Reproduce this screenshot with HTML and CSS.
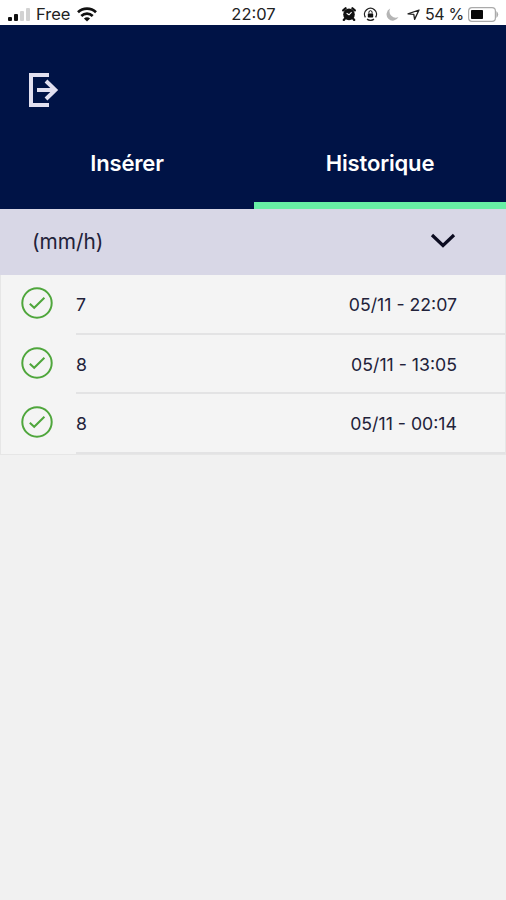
FILE: index.html
```html
<!DOCTYPE html>
<html lang="fr">
<head>
    <meta charset="UTF-8">
    <meta name="viewport" content="width=device-width, initial-scale=1.0">
    <title>Historique</title>
    <link rel="stylesheet" href="styles.css">
</head>
<body>
    <div class="status-bar">
        <div class="status-left">
            <svg class="signal" width="23" height="13" viewBox="0 0 23 13">
                <rect x="0" y="9" width="4" height="4" rx="1" fill="#111"/>
                <rect x="6" y="6" width="4" height="7" rx="1" fill="#111"/>
                <rect x="12" y="3" width="4" height="10" rx="1" fill="#d2d2d2"/>
                <rect x="18" y="0" width="4" height="13" rx="1" fill="#d2d2d2"/>
            </svg>
            <span class="carrier">Free</span>
            <svg class="wifi" width="20" height="15" viewBox="0 0 20 15" fill="none" stroke="#111" stroke-width="2.7">
                <path d="M1 5.2C6 .4 14 .4 19 5.2"/>
                <path d="M4.3 8.9C7.6 5.8 12.4 5.8 15.7 8.9"/>
                <path d="M10 14.5L6.9 11.5Q10 9 13.1 11.5Z" fill="#111" stroke="none"/>
            </svg>
        </div>
        <span class="clock">22:07</span>
        <div class="status-right">
            <svg width="14" height="14" viewBox="0 0 14 14">
                <circle cx="7" cy="7.4" r="5.8" fill="#111"/>
                <path d="M1.2 3.4L3.6 1.2M12.8 3.4L10.4 1.2M3 11.5L1.8 13M11 11.5L12.2 13" stroke="#111" stroke-width="2.2" stroke-linecap="round"/>
                <path d="M4.6 6.2L7 7.8L9.6 5.2" fill="none" stroke="#fff" stroke-width="1.1"/>
            </svg>
            <svg class="lock" width="15" height="14" viewBox="0 0 15 14">
                <path d="M2.4 10.4A6 6 0 1 1 12.6 10.4M4 12.1A6 6 0 0 0 11 12.1" fill="none" stroke="#222" stroke-width="1.3"/>
                <rect x="4.8" y="6.4" width="5.4" height="4" rx=".7" fill="#111"/>
                <path d="M5.9 6.5V5.3A1.6 1.6 0 0 1 9.1 5.3V6.5" fill="none" stroke="#111"/>
            </svg>
            <svg class="moon" width="13" height="13" viewBox="0 0 13 13">
                <path d="M4.2.6A6.3 6.3 0 1 0 12.5 9.1A6.3 6.3 0 0 1 4.2.6Z" fill="#b5b5b5"/>
            </svg>
            <svg class="location" width="13" height="13" viewBox="0 0 13 13">
                <path d="M1 5.8L12 2L7.6 11.4L6.8 6.3Z" fill="none" stroke="#222" stroke-width="1.3" stroke-linejoin="round"/>
            </svg>
            <span class="percent">54 %</span>
            <svg class="battery" width="31" height="15" viewBox="0 0 31 15">
                <rect x=".6" y=".6" width="26.8" height="13.8" rx="3.4" fill="#fff" stroke="#aaa" stroke-width="1.2"/>
                <rect x="3" y="3" width="12" height="9" rx=".8" fill="#080808"/>
                <path d="M28.4 4Q32 7.5 28.4 11Z" fill="#aaa"/>
            </svg>
        </div>
    </div>

    <header class="header">
        <button class="logout" aria-label="Déconnexion">
            <svg width="32" height="34" viewBox="0 0 32 34" fill="none" stroke="#e2e0f0" stroke-width="4">
                <path d="M21 2H3V32H21"/>
                <path d="M9 17H28M18 8L27.3 17L18 26"/>
            </svg>
        </button>
        <nav class="tabs">
            <a class="tab">Insérer</a>
            <a class="tab active">Historique</a>
        </nav>
    </header>

    <main class="history">
        <div class="history-header">
            <span>(mm/h)</span>
            <svg width="26" height="16" viewBox="0 0 26 16" fill="none" stroke="#0b0b20" stroke-width="3.2">
                <path d="M2 2L13 12.5L24 2"/>
            </svg>
        </div>
        <ul class="entries">
            <li class="entry">
                <svg class="check" viewBox="0 0 32 32">
                    <circle cx="16" cy="16" r="14.7"/>
                    <path d="M8.8 16.8L13.2 20.8L23.4 10.8"/>
                </svg>
                <div class="entry-body">
                    <span>7</span>
                    <span class="date">05/11 - 22:07</span>
                </div>
            </li>
            <li class="entry">
                <svg class="check" viewBox="0 0 32 32">
                    <circle cx="16" cy="16" r="14.7"/>
                    <path d="M8.8 16.8L13.2 20.8L23.4 10.8"/>
                </svg>
                <div class="entry-body">
                    <span>8</span>
                    <span class="date">05/11 - 13:05</span>
                </div>
            </li>
            <li class="entry">
                <svg class="check" viewBox="0 0 32 32">
                    <circle cx="16" cy="16" r="14.7"/>
                    <path d="M8.8 16.8L13.2 20.8L23.4 10.8"/>
                </svg>
                <div class="entry-body">
                    <span>8</span>
                    <span class="date">05/11 - 00:14</span>
                </div>
            </li>
        </ul>
    </main>
</body>
</html>
```
FILE: styles.css
```css
* {
    margin: 0;
    padding: 0;
    box-sizing: border-box;
}

body {
    min-height: 100vh;
    background: #f1f1f1;
    color: #22223a;
    font-family: Inter, 'Liberation Sans', sans-serif;
}

svg {
    display: block;
    flex-shrink: 0;
}

/* Status bar */
.status-bar {
    display: grid;
    grid-template-columns: 1fr auto 1fr;
    align-items: center;
    height: 25px;
    padding: 3px 7px 0 8px;
    background: #fff;
    color: #222;
    font-size: 16.5px;
    line-height: 22px;
}

.status-left,
.status-right {
    display: flex;
    align-items: center;
}

.status-right {
    justify-content: flex-end;
}

.carrier {
    margin: 0 7px 0 5px;
}

.lock {
    margin-left: 7px;
}

.moon {
    margin-left: 8px;
}

.location {
    margin-left: 8px;
}

.percent {
    margin: 0 4px 0 5px;
    font-size: 16px;
    letter-spacing: -0.3px;
}

/* Header */
.header {
    display: flex;
    flex-direction: column;
    height: 184px;
    padding-top: 48px;
    background: #001346;
}

.logout {
    width: 32px;
    margin-left: 28px;
    background: none;
    border: none;
}

.tabs {
    display: flex;
    flex: 1;
}

.tab {
    width: 254px;
    padding-top: 41px;
    border-bottom: 7px solid transparent;
    color: #fff;
    font-size: 22px;
    font-weight: 600;
    letter-spacing: -0.15px;
    line-height: 30px;
    text-align: center;
}

.tab.active {
    width: 252px;
    border-bottom-color: #67efa5;
}

/* History list */
.history-header {
    display: flex;
    align-items: center;
    justify-content: space-between;
    height: 66px;
    padding: 0 50px 2px 32px;
    background: #d8d7e6;
    font-size: 20.8px;
}

.entries {
    list-style: none;
    background: #f4f4f4;
    border: 1px solid #e6e6e6;
    border-top: none;
}

.entry {
    display: flex;
    align-items: center;
    height: 59.5px;
    padding-left: 20px;
}

.check {
    width: 32px;
    height: 32px;
    margin: 0 23px 3px 0;
    fill: none;
    stroke: #4fa63c;
    stroke-width: 2;
}

.entry-body {
    display: flex;
    flex: 1;
    align-items: center;
    justify-content: space-between;
    height: 100%;
    padding: 2px 48px 0 0;
    border-bottom: 2px solid #e3e3e4;
    font-size: 17.7px;
}
```
